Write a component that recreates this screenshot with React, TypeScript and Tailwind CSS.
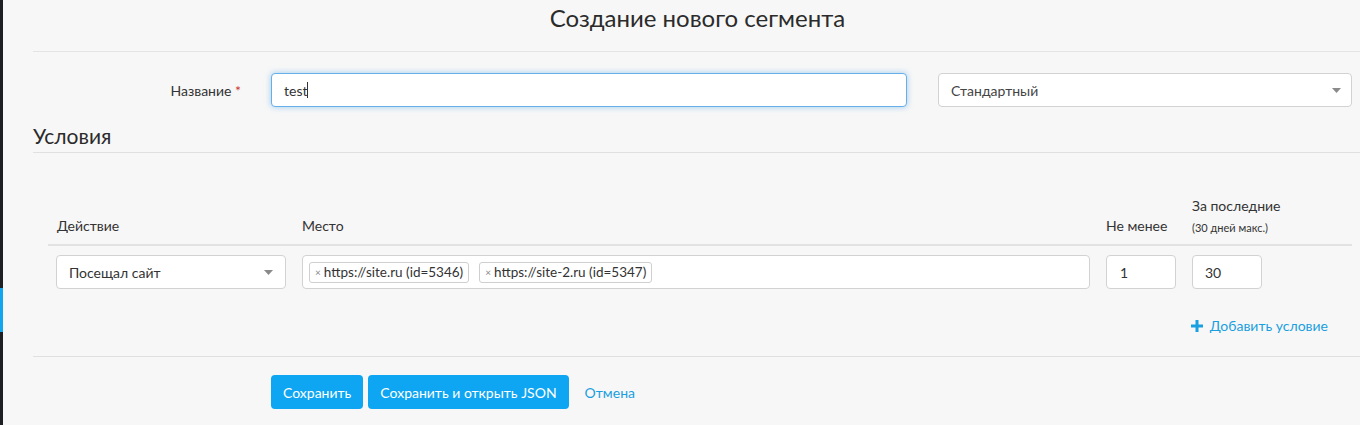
import React from "react";

const font = { fontFamily: "Lato, 'Open Sans', Arial, sans-serif" };

function Caret() {
  return (
    <svg width="9" height="5" viewBox="0 0 9 5" className="shrink-0">
      <path d="M0 0 L9 0 L4.5 5 Z" fill="#8a8a8a" />
    </svg>
  );
}

function Tag({ text }: { text: string }) {
  return (
    <span className="flex items-center h-[21px] px-[5px] border border-[#cfcfcf] rounded-[3px] bg-white text-[13.5px] text-[#333] mr-[10px]">
      <span className="text-[10px] text-[#888] mr-[3px]">×</span>
      {text}
    </span>
  );
}

export default function App() {
  return (
    <div className="flex w-[1360px] h-[425px] overflow-hidden bg-[#f7f7f7]" style={font}>
      <div className="w-[3px] bg-[#1e1f22] flex flex-col shrink-0">
        <div className="h-[288px]" />
        <div className="h-[44px] bg-[#13a6ee]" />
      </div>
      <div className="flex-1 pl-[30px] flex flex-col">
        <div className="h-[52px] border-b border-[#e4e4e4] flex items-center justify-center pl-[2px]">
          <h1 className="text-[24px] text-[#2b2b2b] -mt-[15px]">Создание нового сегмента</h1>
        </div>
        <div className="flex items-center pt-[21px] pr-[8px]">
          <div className="w-[238px] pr-[30px] text-right text-[14px] text-[#333]">
            Название <span className="text-[#c33]">*</span>
          </div>
          <div className="w-[636px] h-[34px] bg-white border border-[#66afe9] rounded-[4px] shadow-[0_0_6px_rgba(102,175,233,0.6)] flex items-center px-[12px] text-[14px] text-[#333]">
            test<span className="w-px h-[16px] bg-[#333]" />
          </div>
          <div className="ml-[31px] flex-1 h-[34px] bg-white border border-[#d2d2d2] rounded-[4px] flex items-center justify-between pl-[12px] pr-[10px] text-[14px] text-[#444]">
            <span>Стандартный</span>
            <Caret />
          </div>
        </div>
        <div className="mt-[13px] h-[33px] border-b border-[#e0e0e0] flex items-end pb-[1px]">
          <h2 className="text-[21px] text-[#2b2b2b]">Условия</h2>
        </div>
        <div className="pl-[15px] pr-[8px] mt-[45px]">
          <div className="flex items-end h-[48px] border-b-2 border-[#e2e2e2] pb-[8px] text-[14px] text-[#333]">
            <div className="w-[254px] pl-[9px]">Действие</div>
            <div className="w-[804px]">Место</div>
            <div className="w-[86px]">Не менее</div>
            <div className="flex flex-col">
              <span className="mb-[4px]">За последние</span>
              <span className="text-[11px]">(30 дней макс.)</span>
            </div>
          </div>
          <div className="flex items-center pt-[9px] text-[14px] text-[#333]">
            <div className="ml-[8px] w-[230px] h-[34px] bg-white border border-[#d2d2d2] rounded-[4px] flex items-center justify-between pl-[12px] pr-[12px]">
              <span>Посещал сайт</span>
              <Caret />
            </div>
            <div className="ml-[16px] w-[788px] h-[34px] bg-white border border-[#d2d2d2] rounded-[4px] flex items-center pl-[6px]">
              <Tag text="https://site.ru (id=5346)" />
              <Tag text="https://site-2.ru (id=5347)" />
            </div>
            <div className="ml-[16px] w-[70px] h-[34px] bg-white border border-[#d2d2d2] rounded-[4px] flex items-center pl-[13px]">1</div>
            <div className="ml-[16px] w-[70px] h-[34px] bg-white border border-[#d2d2d2] rounded-[4px] flex items-center pl-[12px]">30</div>
          </div>
          <div className="flex justify-end pr-[24px] mt-[26px]">
            <span className="flex items-center text-[14px] text-[#1a9fe0]">
              <svg width="12" height="12" viewBox="0 0 12 12" className="mr-[7px]">
                <path d="M4.5 0h3v4.5H12v3H7.5V12h-3V7.5H0v-3h4.5z" fill="#1a9fe0" />
              </svg>
              Добавить условие
            </span>
          </div>
        </div>
        <div className="mt-[20px] border-b border-[#e0e0e0]" />
        <div className="flex items-center mt-[18px] pl-[238px] text-[14px]">
          <button className="h-[34px] px-[12px] rounded-[4px] bg-[#0ea5f2] text-white">Сохранить</button>
          <button className="ml-[5px] h-[34px] px-[12px] rounded-[4px] bg-[#0ea5f2] text-white">Сохранить и открыть JSON</button>
          <span className="ml-[16px] text-[#1a9fe0]">Отмена</span>
        </div>
      </div>
    </div>
  );
}
